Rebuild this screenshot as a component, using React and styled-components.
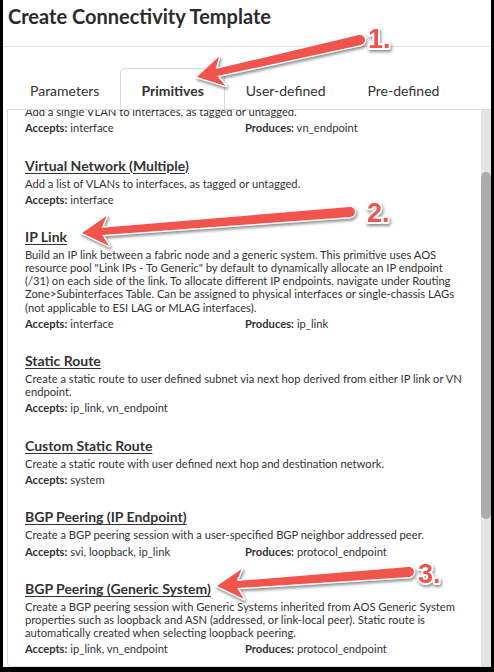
import React, { useLayoutEffect, useRef } from "react";
import styled, { createGlobalStyle } from "styled-components";

const GlobalStyle = createGlobalStyle`
  html, body {
    margin: 0;
    padding: 0;
    background: #000;
  }
  body {
    font-family: Lato, "Noto Sans", "Liberation Sans", sans-serif;
    color: #333;
  }
`;

const Modal = styled.div`
  position: relative;
  margin-left: 3px;
  width: 488px;
  height: 667px;
  background: #fff;
  display: flex;
  flex-direction: column;
  overflow: hidden;
`;

const Header = styled.div`
  height: 47px;
  border-bottom: 1px solid #e2e2e2;
  padding: 4px 0 0 5px;
  box-sizing: border-box;
  flex-shrink: 0;
`;

const Title = styled.h1`
  margin: 0;
  font-size: 20px;
  line-height: 24px;
  font-weight: 700;
  color: #2b2b2b;
`;

const TabRow = styled.div`
  display: flex;
  margin-top: 21px;
  padding-left: 6px;
  height: 41px;
  flex-shrink: 0;
`;

const Tab = styled.div`
  display: flex;
  align-items: center;
  padding: 2px 20px 0;
  font-size: 14px;
  color: #333;
  white-space: nowrap;
  font-weight: ${({ $active }) => ($active ? 700 : 400)};
  border: 1px solid ${({ $active }) => ($active ? "#dadada" : "transparent")};
  border-bottom: none;
  border-radius: 5px 5px 0 0;
`;

const Panel = styled.div`
  flex: 1;
  display: flex;
  margin-left: 4px;
  border: 1px solid #dcdcdc;
  border-right: none;
  border-bottom-left-radius: 5px;
  overflow: hidden;
  min-height: 0;
`;

const List = styled.div`
  flex: 1;
  overflow: hidden;
  padding: 16px 14px 0 17px;
`;

const Track = styled.div`
  width: 10px;
  flex-shrink: 0;
  background: #e4e4e4;
`;

const Thumb = styled.div`
  margin-top: 62px;
  height: 347px;
  border-radius: 5px;
  background: #ababab;
`;

const Item = styled.div`
  margin-bottom: 22px;
`;

const ItemTitle = styled.div`
  font-size: 14px;
  line-height: 18px;
  font-weight: 700;
  text-decoration: underline;
  text-underline-offset: 2px;
  margin-bottom: 2px;
`;

const Desc = styled.div`
  font-size: 11.2px;
  line-height: 13.1px;
`;

const Meta = styled.div`
  display: grid;
  grid-template-columns: 220px 1fr;
  font-size: 11.2px;
  line-height: 13.5px;
  margin-top: 3px;
  b {
    font-weight: 700;
  }
`;

const Overlay = styled.svg`
  position: absolute;
  left: -3px;
  top: 0;
  pointer-events: none;
  filter: drop-shadow(1px 2px 1.5px rgba(0, 0, 0, 0.45));
`;

const items = [
  {
    name: "Virtual Network (Single)",
    desc: "Add a single VLAN to interfaces, as tagged or untagged.",
    accepts: "interface",
    produces: "vn_endpoint",
  },
  {
    name: "Virtual Network (Multiple)",
    desc: "Add a list of VLANs to interfaces, as tagged or untagged.",
    accepts: "interface",
  },
  {
    name: "IP Link",
    desc:
      'Build an IP link between a fabric node and a generic system. This primitive uses AOS resource pool "Link IPs - To Generic" by default to dynamically allocate an IP endpoint (/31) on each side of the link. To allocate different IP endpoints, navigate under Routing Zone>Subinterfaces Table. Can be assigned to physical interfaces or single-chassis LAGs (not applicable to ESI LAG or MLAG interfaces).',
    accepts: "interface",
    produces: "ip_link",
  },
  {
    name: "Static Route",
    desc: "Create a static route to user defined subnet via next hop derived from either IP link or VN endpoint.",
    accepts: "ip_link, vn_endpoint",
  },
  {
    name: "Custom Static Route",
    desc: "Create a static route with user defined next hop and destination network.",
    accepts: "system",
  },
  {
    name: "BGP Peering (IP Endpoint)",
    desc: "Create a BGP peering session with a user-specified BGP neighbor addressed peer.",
    accepts: "svi, loopback, ip_link",
    produces: "protocol_endpoint",
  },
  {
    name: "BGP Peering (Generic System)",
    desc: "Create a BGP peering session with Generic Systems inherited from AOS Generic System properties such as loopback and ASN (addressed, or link-local peer). Static route is automatically created when selecting loopback peering.",
    accepts: "ip_link, vn_endpoint",
    produces: "protocol_endpoint",
  },
];

const RED = "#f0544c";

// build arrow shapes from tail -> tip
function arrowShapes(x1, y1, x2, y2) {
  const dx = x1 - x2;
  const dy = y1 - y2;
  const len = Math.hypot(dx, dy);
  const ux = dx / len;
  const uy = dy / len;
  const nx = -uy;
  const ny = ux;
  const L = 26;
  const H = 15;
  const neck = 20;
  const wn = 3.6;
  const wt = 5;
  const p = (a, b) => `${(x2 + ux * a + nx * b).toFixed(1)},${(y2 + uy * a + ny * b).toFixed(1)}`;
  const poly = [
    p(0, 0),
    p(L, H),
    p(neck, wn),
    p(len, wt),
    p(len, -wt),
    p(neck, -wn),
    p(L, -H),
  ].join(" ");
  return { poly, cx: x1, cy: y1, r: wt };
}

const arrows = [
  { tail: [360, 40], tip: [197, 77], label: "1.", lx: 368, ly: 48 },
  { tail: [350, 212], tip: [82, 233], label: "2.", lx: 367, ly: 222 },
  { tail: [409, 572], tip: [217, 586], label: "3.", lx: 418, ly: 583 },
];

function Annotations() {
  const shapes = arrows.map((a) => arrowShapes(a.tail[0], a.tail[1], a.tip[0], a.tip[1]));
  return (
    <Overlay width="494" height="672" viewBox="0 0 494 672">
      {shapes.map((s, i) => (
        <g key={"o" + i} fill="#fff" stroke="#fff" strokeWidth="3" strokeLinejoin="round">
          <polygon points={s.poly} />
          <circle cx={s.cx} cy={s.cy} r={s.r} />
        </g>
      ))}
      {shapes.map((s, i) => (
        <g key={"f" + i} fill={RED}>
          <polygon points={s.poly} />
          <circle cx={s.cx} cy={s.cy} r={s.r} />
        </g>
      ))}
      {arrows.map((a) => (
        <text
          key={a.label}
          x={a.lx}
          y={a.ly}
          fill={RED}
          stroke="#fff"
          strokeWidth="4"
          strokeLinejoin="round"
          paintOrder="stroke"
          fontFamily="'Liberation Sans', Arial, sans-serif"
          fontWeight="700"
          fontSize="27"
        >
          {a.label}
        </text>
      ))}
    </Overlay>
  );
}

export default function App() {
  const listRef = useRef(null);

  useLayoutEffect(() => {
    if (listRef.current) listRef.current.scrollTop = 41;
  }, []);

  return (
    <>
      <GlobalStyle />
      <Modal>
        <Header>
          <Title>Create Connectivity Template</Title>
        </Header>
        <TabRow>
          <Tab>Parameters</Tab>
          <Tab $active>Primitives</Tab>
          <Tab>User-defined</Tab>
          <Tab>Pre-defined</Tab>
        </TabRow>
        <Panel>
          <List ref={listRef}>
            {items.map((it) => (
              <Item key={it.name}>
                <ItemTitle>{it.name}</ItemTitle>
                <Desc>{it.desc}</Desc>
                <Meta>
                  <span>
                    <b>Accepts:</b> {it.accepts}
                  </span>
                  {it.produces && (
                    <span>
                      <b>Produces:</b> {it.produces}
                    </span>
                  )}
                </Meta>
              </Item>
            ))}
          </List>
          <Track>
            <Thumb />
          </Track>
        </Panel>
        <Annotations />
      </Modal>
    </>
  );
}
